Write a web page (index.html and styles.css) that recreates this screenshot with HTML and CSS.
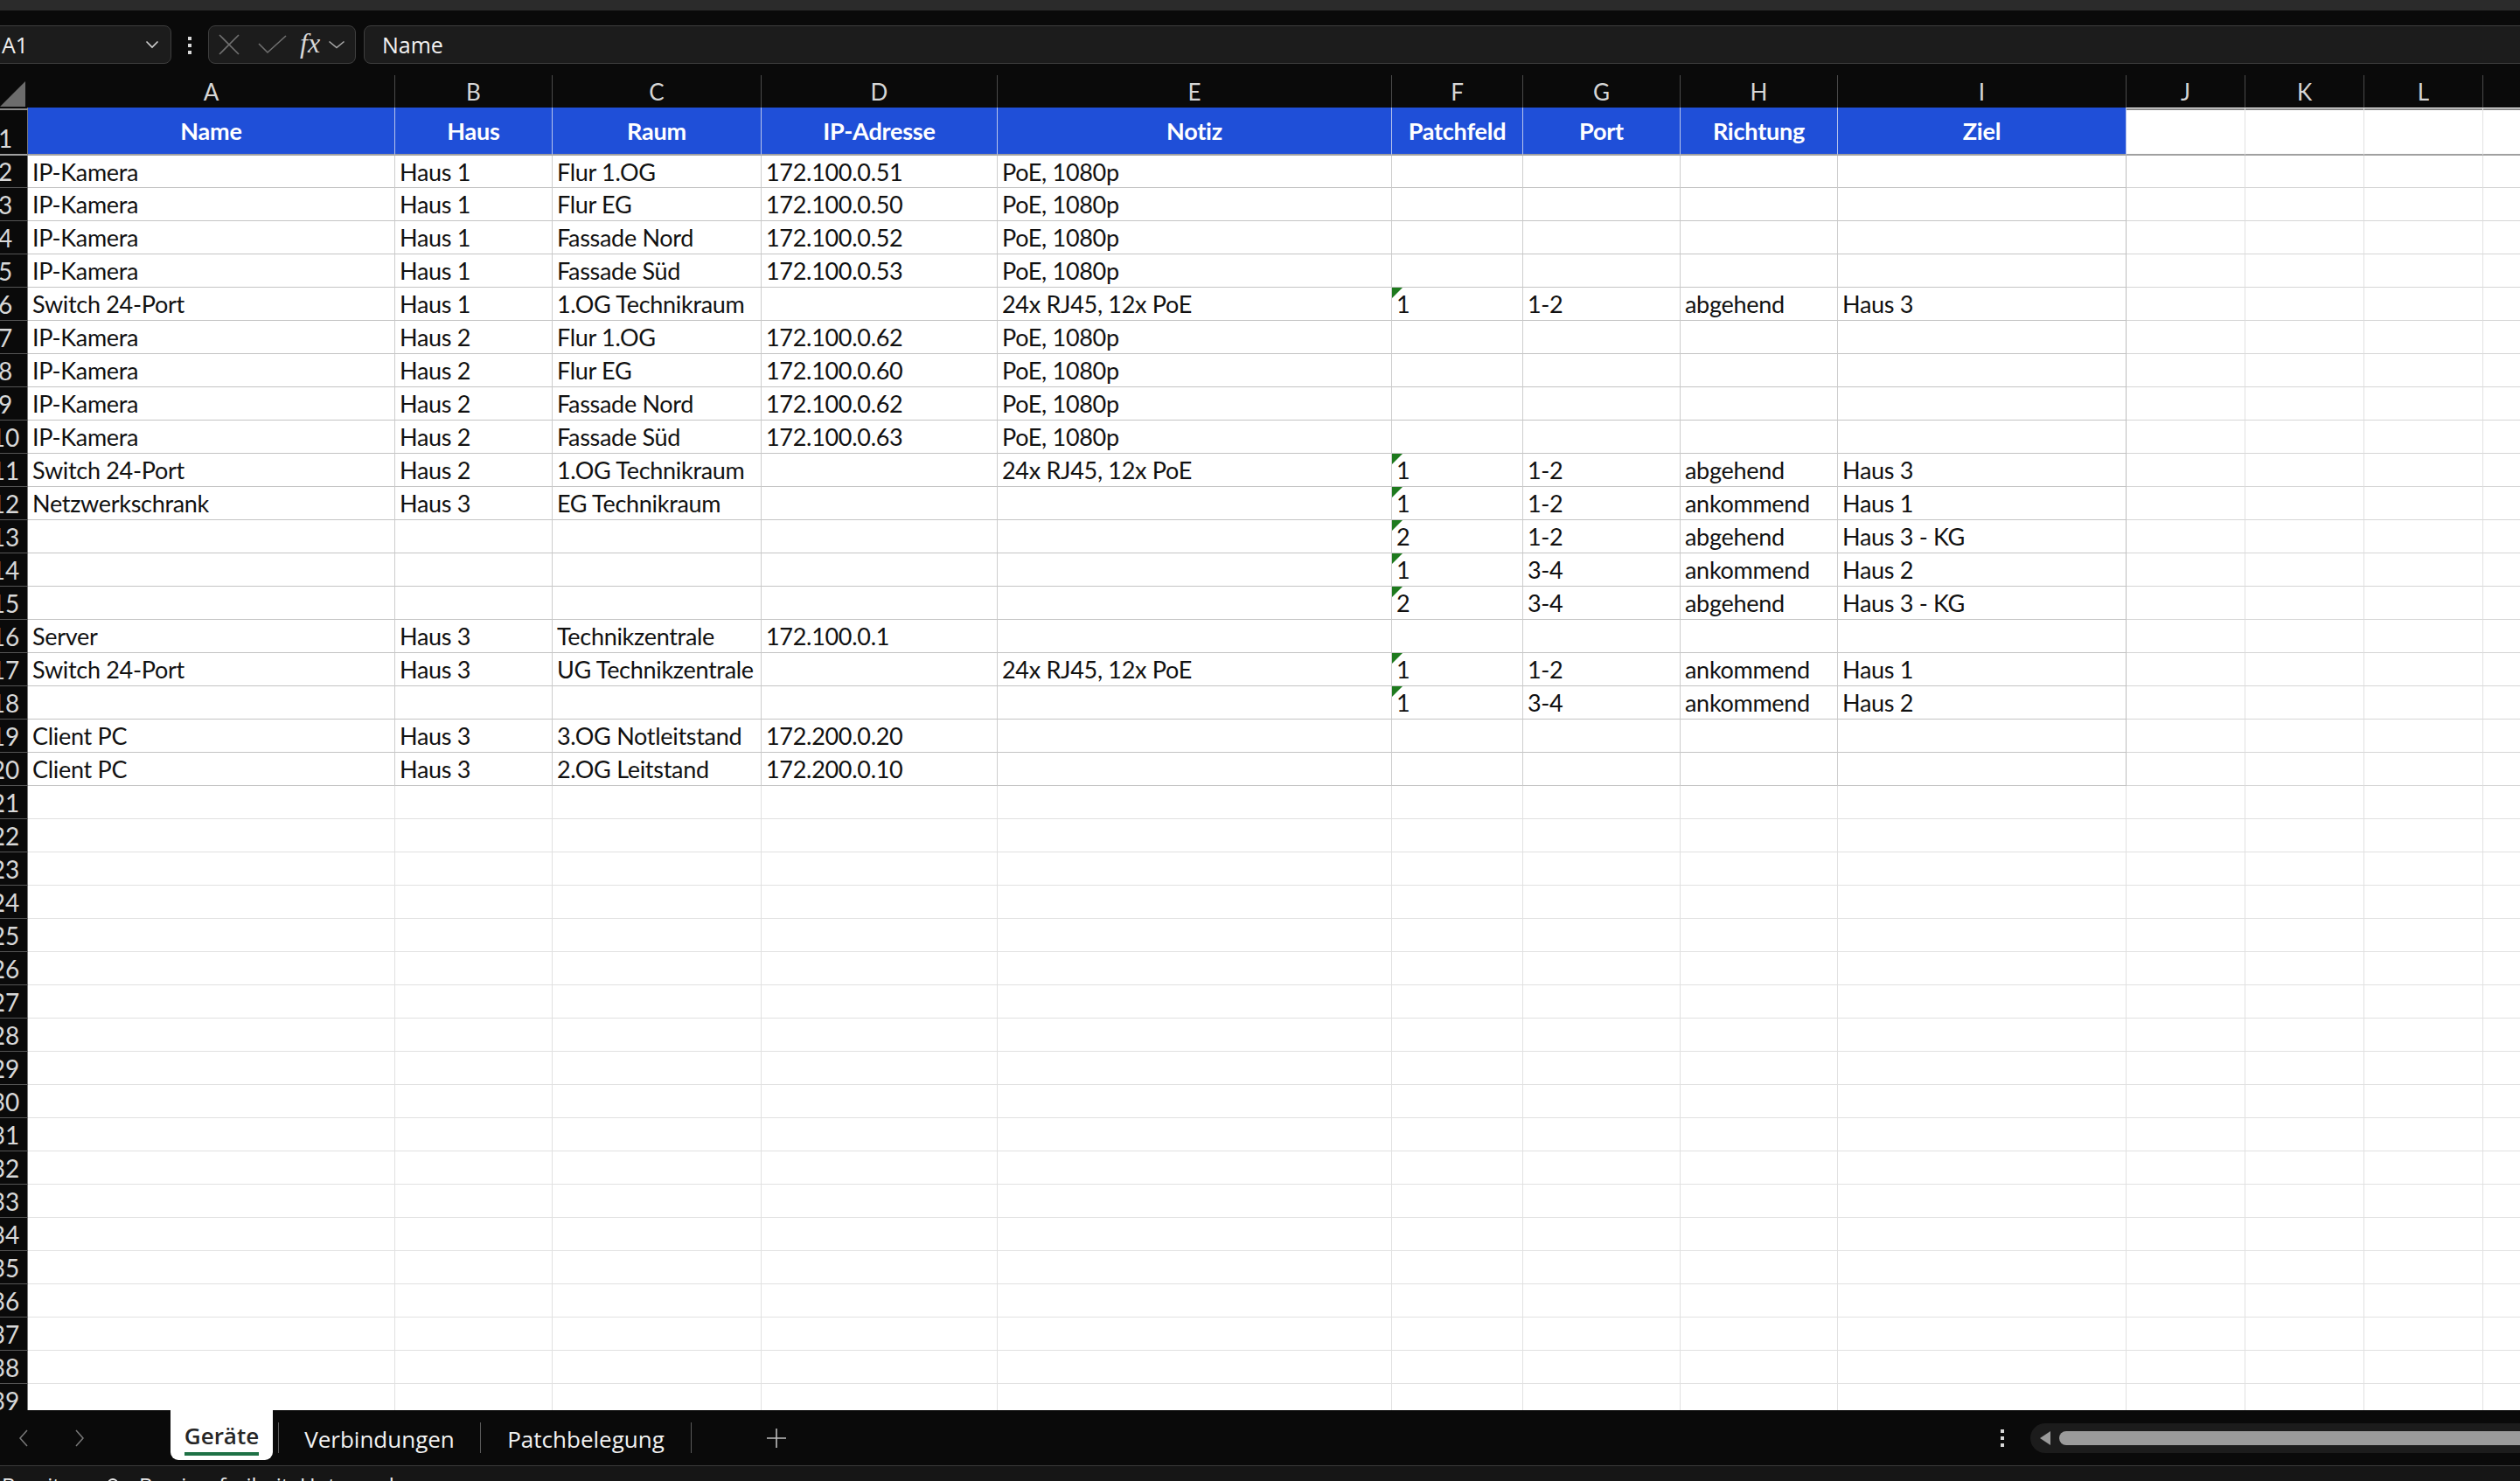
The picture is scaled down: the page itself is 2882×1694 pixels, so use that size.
FILE: index.html
```html
<!DOCTYPE html>
<html lang="de">
  <head>
    <meta charset="UTF-8" />
    <title>Geräte - Excel</title>
    <link rel="stylesheet" href="styles.css">
  </head>
  <body>
    <div class="top-strip"></div>

    <div class="formula-bar">
      <div class="name-box">
        <span>A1</span>
        <svg width="16" height="10" viewBox="0 0 16 10"><path d="M1.5 1.5 L8 8 L14.5 1.5" fill="none" stroke="#d0d0d0" stroke-width="1.6"/></svg>
      </div>
      <div class="fb-dots">
        <svg width="6" height="20" viewBox="0 0 6 20"><rect x="1" y="0" width="4" height="4" fill="#d8d8d8"/><rect x="1" y="8" width="4" height="4" fill="#d8d8d8"/><rect x="1" y="16" width="4" height="4" fill="#d8d8d8"/></svg>
      </div>
      <div class="fx-box">
        <svg class="fx-cancel" width="24" height="24" viewBox="0 0 24 24"><path d="M1 1 L23 23 M23 1 L1 23" stroke="#707070" stroke-width="1.6" fill="none"/></svg>
        <svg class="fx-ok" width="33" height="22" viewBox="0 0 33 22"><path d="M1 10 L11 20 L32 1" stroke="#707070" stroke-width="1.6" fill="none"/></svg>
        <span class="fx">fx</span>
        <svg width="20" height="10" viewBox="0 0 20 10"><path d="M1.5 1.5 L10 8.5 L18.5 1.5" fill="none" stroke="#a8a8a8" stroke-width="1.6"/></svg>
      </div>
      <div class="formula-input">Name</div>
    </div>

    <div class="sheet" id="sheet"></div>

    <div class="tab-bar">
      <div class="tab-nav">
        <svg width="12" height="20" viewBox="0 0 12 20"><path d="M10 1 L2 10 L10 19" fill="none" stroke="#7a7a7a" stroke-width="1.5"/></svg>
        <svg width="12" height="20" viewBox="0 0 12 20"><path d="M2 1 L10 10 L2 19" fill="none" stroke="#7a7a7a" stroke-width="1.5"/></svg>
      </div>
      <div class="tab active"><span>Geräte</span></div>
      <div class="tab-sep"></div>
      <div class="tab tab-verb">Verbindungen</div>
      <div class="tab-sep"></div>
      <div class="tab tab-patch">Patchbelegung</div>
      <div class="tab-sep"></div>
      <div class="tab-add">
        <svg width="22" height="22" viewBox="0 0 22 22"><path d="M11 0 V22 M0 11 H22" stroke="#bdbdbd" stroke-width="1.6"/></svg>
      </div>
      <div class="tab-spacer"></div>
      <div class="tab-more">
        <svg width="6" height="20" viewBox="0 0 6 20"><rect x="1" y="0" width="4" height="4" fill="#d8d8d8"/><rect x="1" y="8" width="4" height="4" fill="#d8d8d8"/><rect x="1" y="16" width="4" height="4" fill="#d8d8d8"/></svg>
      </div>
      <div class="hscroll">
        <svg width="14" height="16" viewBox="0 0 14 16"><path d="M13 0 V16 L1 8 Z" fill="#9a9a9a"/></svg>
        <div class="hscroll-thumb"></div>
      </div>
    </div>

    <div class="status-bar">
      <span class="status-ready">Bereit</span>
      <svg class="status-icon" width="28" height="28" viewBox="0 0 28 28"><circle cx="14" cy="6" r="5" fill="none" stroke="#e8e8e8" stroke-width="2"/><circle cx="6" cy="10" r="4" fill="none" stroke="#e8e8e8" stroke-width="2"/><circle cx="22" cy="10" r="4" fill="none" stroke="#e8e8e8" stroke-width="2"/></svg>
      <span>Barrierefreiheit: Untersuchen</span>
    </div>

    <script>
      const sheet = document.getElementById("sheet");
      const letters = "ABCDEFGHIJKLM";
      const headers = ["Name", "Haus", "Raum", "IP-Adresse", "Notiz", "Patchfeld", "Port", "Richtung", "Ziel"];

      // rows 2..20, columns A..I
      const data = [
        ["IP-Kamera", "Haus 1", "Flur 1.OG", "172.100.0.51", "PoE, 1080p"],
        ["IP-Kamera", "Haus 1", "Flur EG", "172.100.0.50", "PoE, 1080p"],
        ["IP-Kamera", "Haus 1", "Fassade Nord", "172.100.0.52", "PoE, 1080p"],
        ["IP-Kamera", "Haus 1", "Fassade Süd", "172.100.0.53", "PoE, 1080p"],
        ["Switch 24-Port", "Haus 1", "1.OG Technikraum", "", "24x RJ45, 12x PoE", "1", "1-2", "abgehend", "Haus 3"],
        ["IP-Kamera", "Haus 2", "Flur 1.OG", "172.100.0.62", "PoE, 1080p"],
        ["IP-Kamera", "Haus 2", "Flur EG", "172.100.0.60", "PoE, 1080p"],
        ["IP-Kamera", "Haus 2", "Fassade Nord", "172.100.0.62", "PoE, 1080p"],
        ["IP-Kamera", "Haus 2", "Fassade Süd", "172.100.0.63", "PoE, 1080p"],
        ["Switch 24-Port", "Haus 2", "1.OG Technikraum", "", "24x RJ45, 12x PoE", "1", "1-2", "abgehend", "Haus 3"],
        ["Netzwerkschrank", "Haus 3", "EG Technikraum", "", "", "1", "1-2", "ankommend", "Haus 1"],
        ["", "", "", "", "", "2", "1-2", "abgehend", "Haus 3 - KG"],
        ["", "", "", "", "", "1", "3-4", "ankommend", "Haus 2"],
        ["", "", "", "", "", "2", "3-4", "abgehend", "Haus 3 - KG"],
        ["Server", "Haus 3", "Technikzentrale", "172.100.0.1"],
        ["Switch 24-Port", "Haus 3", "UG Technikzentrale", "", "24x RJ45, 12x PoE", "1", "1-2", "ankommend", "Haus 1"],
        ["", "", "", "", "", "1", "3-4", "ankommend", "Haus 2"],
        ["Client PC", "Haus 3", "3.OG Notleitstand", "172.200.0.20"],
        ["Client PC", "Haus 3", "2.OG Leitstand", "172.200.0.10"]
      ];

      function cell(cls, text) {
        const el = document.createElement("div");
        el.className = cls;
        if (text) el.textContent = text;
        return el;
      }

      function rowHead(n) {
        const el = cell("rh");
        const num = document.createElement("span");
        num.textContent = n;
        el.appendChild(num);
        return el;
      }

      // column letters
      const head = cell("row col-head");
      head.appendChild(cell("corner"));
      for (const l of letters) head.appendChild(cell("ch", l));
      sheet.appendChild(head);

      // row 1 with the blue titles
      const first = cell("row row-title");
      first.appendChild(rowHead(1));
      for (let c = 0; c < letters.length; c++) {
        first.appendChild(c < headers.length ? cell("c th", headers[c]) : cell("c"));
      }
      sheet.appendChild(first);

      for (let r = 2; r <= 39; r++) {
        const values = data[r - 2];
        const row = cell(values ? "row data" : "row");
        if (r === 2) row.classList.add("row-two");
        row.appendChild(rowHead(r));
        for (let c = 0; c < letters.length; c++) {
          const text = values ? values[c] || "" : "";
          const el = cell(values && c < 9 ? "c in" : "c", text);
          if (c === 5 && text) el.classList.add("flag"); // number stored as text
          row.appendChild(el);
        }
        sheet.appendChild(row);
      }
    </script>
  </body>
</html>
```

FILE: styles.css
```css
* {
  margin: 0;
  padding: 0;
  box-sizing: border-box;
}

body {
  width: 2882px;
  height: 1694px;
  background: #0a0a0a;
  overflow: hidden;
  font-family: "Open Sans", sans-serif;
}

.top-strip {
  height: 12px;
  background: #2b2b2b;
}

/* formula bar */
.formula-bar {
  height: 74px;
  display: flex;
  align-items: center;
  padding-top: 4px;
  margin-left: -10px;
}

.name-box,
.fx-box,
.formula-input {
  height: 44px;
  background: #1c1c1c;
  border: 1px solid #3e3e3e;
  border-radius: 8px;
  display: flex;
  align-items: center;
}

.name-box {
  width: 206px;
  padding: 0 13px 0 11px;
  justify-content: space-between;
  color: #f0f0f0;
  font-size: 25px;
}

.fb-dots {
  width: 42px;
  display: flex;
  justify-content: center;
  padding-top: 2px;
}

.fx-box {
  width: 169px;
  padding-left: 11px;
}

.fx-cancel {
  margin-right: 21px;
}

.fx-ok {
  margin-right: 15px;
}

.fx {
  font-family: "Liberation Serif", serif;
  font-style: italic;
  font-size: 32px;
  color: #d8d8d8;
  line-height: 1;
  margin-right: 9px;
  margin-top: -4px;
}

.formula-input {
  flex: 1;
  margin-left: 9px;
  margin-right: -20px;
  padding-left: 20px;
  color: #f2f2f2;
  font-size: 25px;
}

/* grid */
.sheet {
  height: 1527px;
  overflow: hidden;
  background: #fff;
}

.row {
  display: grid;
  grid-template-columns: 32px 420px 180px 239px 270px 451px 150px 180px 180px 330px 136px 136px 136px 136px;
  height: 38px;
  font-family: "Lato", sans-serif;
  font-size: 27px;
  letter-spacing: -0.3px;
  color: #111;
}

.row-two {
  height: 37px;
}

.col-head {
  height: 37px;
  background: #0a0a0a;
}

.corner {
  position: relative;
  border-bottom: 2px solid #8a8a8a;
}

.corner::after {
  content: "";
  position: absolute;
  right: 3px;
  bottom: 2px;
  border-style: solid;
  border-width: 0 0 29px 29px;
  border-color: transparent transparent #6c6c6c transparent;
}

.ch {
  border-right: 1px solid #4a4a4a;
  border-bottom: 2px solid #8a8a8a;
  color: #d6d6d6;
  font-size: 26px;
  letter-spacing: 0;
  text-align: center;
  line-height: 38px;
}

.rh {
  background: #0a0a0a;
  border-right: 1px solid #777;
  border-bottom: 1px solid #555;
  color: #d8d8d8;
  display: flex;
  align-items: flex-end;
  line-height: 35px;
  font-size: 28px;
  letter-spacing: 0;
}

.rh span {
  width: 12px;
  white-space: nowrap;
  display: flex;
  justify-content: center;
}

.c {
  border-right: 1px solid #e1e1e1;
  border-bottom: 1px solid #e1e1e1;
  padding-left: 5px;
  line-height: 38px;
  white-space: nowrap;
  overflow: hidden;
  position: relative;
}

.row-two .c {
  line-height: 37px;
}

.row-title {
  height: 55px;
}

.row-title .c {
  border-bottom: 2px solid #a0a0a0;
}

.row-title .rh {
  border-bottom: 2px solid #a0a0a0;
  line-height: 36px;
}

.th {
  background: #1f4fd8;
  color: #fff;
  font-weight: 700;
  font-size: 27px;
  letter-spacing: -0.2px;
  text-align: center;
  padding-left: 0;
  line-height: 54px;
  border-right-color: #b7c4ec;
}

.data .c {
  border-bottom-color: #d6d6d6;
}

.data .in {
  border-right-color: #cdcdcd;
  border-bottom-color: #c4c4c4;
}

.data .in:nth-child(10) {
  border-right-color: #bdbdbd;
}

.flag::before {
  content: "";
  position: absolute;
  left: 0;
  top: 0;
  border-style: solid;
  border-width: 12px 12px 0 0;
  border-color: #1e7a1e transparent transparent transparent;
}

/* sheet tabs */
.tab-bar {
  height: 64px;
  display: flex;
  align-items: center;
  border-bottom: 1px solid #3a3a3a;
  background: #0a0a0a;
}

.tab-nav {
  width: 195px;
  display: flex;
  gap: 52px;
  padding-left: 21px;
  align-items: center;
}

.tab {
  color: #f2f2f2;
  font-size: 26px;
  text-align: center;
  padding-top: 3px;
}

.tab.active {
  align-self: flex-start;
  width: 117px;
  height: 57px;
  background: #fff;
  border-radius: 0 0 9px 9px;
  color: #262626;
  font-weight: 600;
  padding-top: 11px;
  margin-right: 6px;
}

.tab.active span {
  display: inline-block;
  line-height: 30px;
  border-bottom: 4px solid #1e7145;
  padding-bottom: 4px;
}

.tab-sep {
  width: 1px;
  height: 35px;
  background: #5a5a5a;
}

.tab-verb {
  width: 230px;
}

.tab-patch {
  width: 240px;
}

.tab-add {
  width: 194px;
  display: flex;
  justify-content: center;
}

.tab-spacer {
  flex: 1;
}

.tab-more {
  width: 30px;
  display: flex;
  justify-content: center;
  margin-right: 17px;
}

.hscroll {
  width: 590px;
  margin-right: -30px;
  height: 34px;
  border-radius: 17px;
  background: #1c1c1c;
  display: flex;
  align-items: center;
  padding-left: 10px;
  gap: 9px;
}

.hscroll-thumb {
  flex: 1;
  height: 16px;
  border-radius: 8px;
  background: #9b9b9b;
}

/* status bar */
.status-bar {
  height: 17px;
  background: #161616;
  overflow: hidden;
  display: flex;
  align-items: flex-start;
  gap: 16px;
  padding-top: 10px;
  padding-left: 2px;
  color: #eaeaea;
  font-size: 24px;
  line-height: 24px;
}

.status-ready {
  margin-right: 30px;
}

.status-icon {
  margin-top: 4px;
}
```
